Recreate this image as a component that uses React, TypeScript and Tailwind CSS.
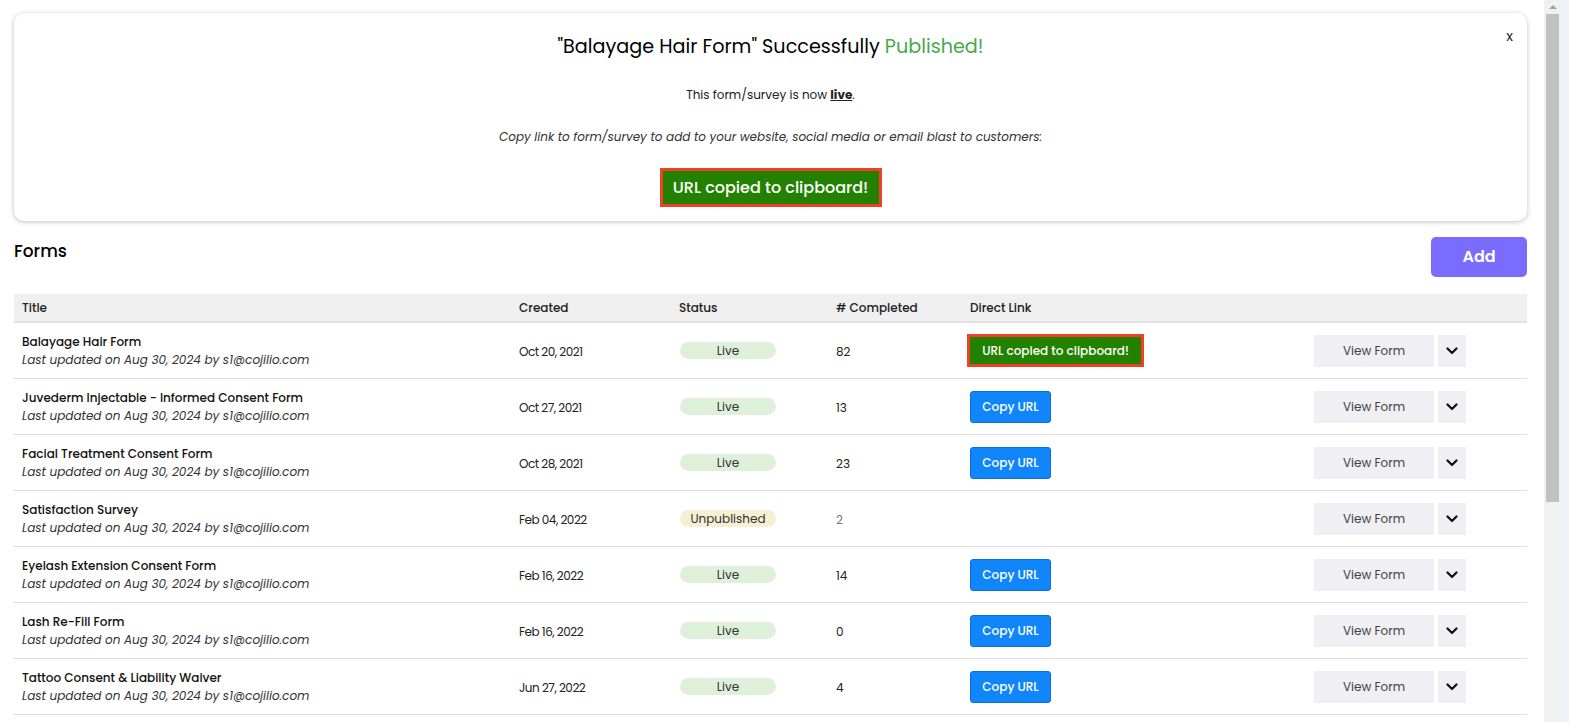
import React from "react";

type Row = {
  title: string;
  created: string;
  status: "Live" | "Unpublished";
  completed: string;
  link: "copied" | "copy" | "none";
};

const rows: Row[] = [
  { title: "Balayage Hair Form", created: "Oct 20, 2021", status: "Live", completed: "82", link: "copied" },
  { title: "Juvederm Injectable - Informed Consent Form", created: "Oct 27, 2021", status: "Live", completed: "13", link: "copy" },
  { title: "Facial Treatment Consent Form", created: "Oct 28, 2021", status: "Live", completed: "23", link: "copy" },
  { title: "Satisfaction Survey", created: "Feb 04, 2022", status: "Unpublished", completed: "2", link: "none" },
  { title: "Eyelash Extension Consent Form", created: "Feb 16, 2022", status: "Live", completed: "14", link: "copy" },
  { title: "Lash Re-Fill Form", created: "Feb 16, 2022", status: "Live", completed: "0", link: "copy" },
  { title: "Tattoo Consent & Liability Waiver", created: "Jun 27, 2022", status: "Live", completed: "4", link: "copy" },
];

const Chevron = () => (
  <svg width="12" height="8" viewBox="0 0 12 8" fill="none">
    <path d="M1.5 1.5L6 6l4.5-4.5" stroke="#111" strokeWidth="2.2" strokeLinecap="round" strokeLinejoin="round" />
  </svg>
);

const FormRow = ({ row }: { row: Row }) => (
  <div className="flex h-[56px] items-center border-b border-[#dedede] text-[12px] text-[#222]">
    <div className="w-[505px] pl-[8px]">
      <div className="font-medium leading-[18px] text-[#111]">{row.title}</div>
      <div className="italic leading-[18px] text-[#333]">Last updated on Aug 30, 2024 by s1@cojilio.com</div>
    </div>
    <div className="w-[160px] pt-[2px] tracking-[-0.5px]">{row.created}</div>
    <div className="w-[157px]">
      {row.status === "Live" ? (
        <div className="ml-[1px] flex h-[17px] w-[96px] items-center justify-center rounded-full bg-[#dff0da] text-[12px] text-[#333]">
          Live
        </div>
      ) : (
        <div className="ml-[1px] flex h-[17px] w-[96px] items-center justify-center rounded-full bg-[#f5efd3] text-[12px] text-[#333]">
          Unpublished
        </div>
      )}
    </div>
    <div className={"w-[134px] pt-[2px] " + (row.status === "Live" ? "" : "text-[#777]")}>{row.completed}</div>
    <div className="flex-1">
      {row.link === "copied" && (
        <div className="-ml-[3px] inline-flex border-[3px] border-[#f0402a]">
          <div className="flex h-[27px] w-[171px] items-center justify-center bg-[#228200] text-[12px] font-medium text-white">
            URL copied to clipboard!
          </div>
        </div>
      )}
      {row.link === "copy" && (
        <div className="flex h-[32px] w-[81px] items-center justify-center rounded-[3px] border border-[#0b6fd8] bg-[#1185fc] text-[12px] font-medium text-white">
          Copy URL
        </div>
      )}
    </div>
    <div className="flex w-[213px] gap-[4px]">
      <div className="flex h-[32px] w-[120px] items-center justify-center bg-[#efeff4] text-[12px] text-[#444]">
        View Form
      </div>
      <div className="flex h-[32px] w-[28px] items-center justify-center bg-[#efeff4]">
        <Chevron />
      </div>
    </div>
  </div>
);

export default function App() {
  return (
    <div className="flex h-[722px] w-full overflow-hidden bg-[#eff1f9] font-['Poppins','Open_Sans',sans-serif] text-[#111]">
      <div className="w-[1544px] shrink-0 bg-white pl-[14px] pr-[17px] pt-[13px]">
        <div className="relative rounded-[10px] bg-white pb-[14px] shadow-[0_1px_5px_rgba(0,0,0,0.25)]">
          <div className="absolute right-[14px] top-[13px] text-[14px] text-[#222]">x</div>
          <div className="flex flex-col items-center">
            <div className="pt-[22px] text-[19.2px] leading-[24px] text-black">
              "Balayage Hair Form" Successfully <span className="text-[#47a94b]">Published!</span>
            </div>
            <div className="pt-[27px] text-[12px] leading-[18px] text-[#222]">
              This form/survey is now <span className="font-bold underline">live</span>.
            </div>
            <div className="pt-[24px] text-[12px] italic leading-[18px] text-[#333]">
              Copy link to form/survey to add to your website, social media or email blast to customers:
            </div>
            <div className="mt-[22px] inline-flex border-[3px] border-[#f0402a]">
              <div className="flex h-[33px] w-[216px] items-center justify-center bg-[#228200] text-[16px] font-medium text-white">
                URL copied to clipboard!
              </div>
            </div>
          </div>
        </div>

        <div className="mt-[16px] flex items-start justify-between">
          <div className="pt-[2px] text-[17px] font-medium leading-[24px] text-black">Forms</div>
          <div className="flex h-[40px] w-[96px] items-center justify-center rounded-[5px] bg-[#7a6cff] text-[16px] font-semibold text-white">
            Add
          </div>
        </div>

        <div className="mt-[17px]">
          <div className="flex h-[29px] items-center border-b-2 border-[#e2e2e2] bg-[#efefef] text-[12px] font-medium text-[#222]">
            <div className="w-[505px] pl-[8px]">Title</div>
            <div className="w-[160px]">Created</div>
            <div className="w-[157px]">Status</div>
            <div className="w-[134px]"># Completed</div>
            <div className="flex-1">Direct Link</div>
          </div>
          {rows.map((r) => (
            <FormRow key={r.title} row={r} />
          ))}
        </div>
      </div>

      <div className="relative w-[17px] shrink-0 bg-[#f1f1f1]">
        <div className="mx-auto mt-[5px] h-0 w-0 border-x-[4px] border-b-[4px] border-x-transparent border-b-[#a3a3a3]" />
        <div className="mx-auto mt-[5px] h-[488px] w-[13px] bg-[#c1c1c1]" />
      </div>
    </div>
  );
}
